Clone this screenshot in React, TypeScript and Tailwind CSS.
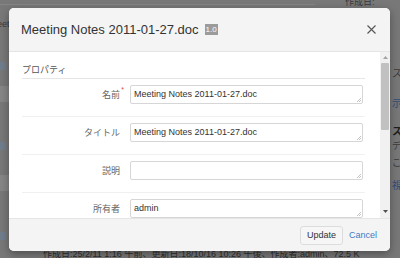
import React from "react";

function Field({ value }: { value: string }) {
  return (
    <div className="relative ml-[10px] mr-[2px] flex h-[19px] min-w-0 flex-1 items-center rounded-[2px] border border-[#d6d6d6] bg-white px-[3px] text-[9px] leading-[11px] text-[#333]">
      {value}
      <svg className="absolute bottom-[1px] right-[1px]" width="5" height="5" viewBox="0 0 5 5">
        <path d="M1 5 L5 1 M3 5 L5 3" stroke="#b5b5b5" strokeWidth="0.8" fill="none" />
      </svg>
    </div>
  );
}

function Row({ label, value, required }: { label: string; value: string; required?: boolean }) {
  return (
    <div className="flex items-center border-b border-[#f0f0f0] pb-[12px] pt-[6px]">
      <div className="relative w-[98px] shrink-0 text-right text-[9px] leading-[12px] text-[#666]">
        {label}
        {required && (
          <span className="absolute right-[-4px] top-[-3px] text-[7px] leading-none text-[#e23c3c]">*</span>
        )}
      </div>
      <Field value={value} />
    </div>
  );
}

export default function App() {
  return (
    <div className="relative h-[258px] w-[400px] overflow-hidden bg-[#787878] font-['Liberation_Sans','Noto_Sans_CJK_JP',sans-serif]">
      {/* background page, dimmed */}
      <div className="flex h-full flex-col">
        <div className="flex h-[8px] shrink-0 items-start">
          <div className="mt-[4px] h-px w-[315px] bg-[#858585]" />
          <div className="ml-[30px] mt-[-4px] text-[9px] leading-[12px] text-[#3a3a3a]">作成日:</div>
        </div>
        <div className="flex min-h-0 flex-1">
          <div className="flex w-[9px] shrink-0 flex-col overflow-hidden">
            <div className="ml-[-3px] mt-[11px] text-[9px] leading-[10px] text-[#3a3a3a]">eet</div>
            <div className="mt-[33px] h-[8px] w-[6px] rounded-[1px] bg-[#6f7d8c]" />
            <div className="mt-[16px] h-[16px] w-[9px] bg-[#858585]" />
            <div className="mt-[40px] h-[8px] w-[6px] rounded-[1px] bg-[#6f7d8c]" />
            <div className="mt-[25px] h-[16px] w-[9px] bg-[#858585]" />
            <div className="mt-[41px] h-[8px] w-[6px] rounded-[1px] bg-[#6f7d8c]" />
          </div>
          <div className="flex-1" />
          <div className="flex w-[9px] shrink-0 flex-col overflow-hidden whitespace-nowrap pl-[1px]">
            <div className="mt-[60px] text-[10px] leading-[12px] text-[#3a3a3a]">ス</div>
            <div className="mt-[18px] text-[10px] leading-[12px] text-[#2e4c78]">示</div>
            <div className="mt-[16px] text-[10px] font-bold leading-[12px] text-[#1e1e1e]">スス</div>
            <div className="mt-[3px] text-[9px] leading-[11px] text-[#3a3a3a]">デ</div>
            <div className="mt-[6px] text-[9px] leading-[11px] text-[#3a3a3a]">こ</div>
            <div className="mt-[11px] text-[10px] leading-[12px] text-[#2e4c78]">視</div>
          </div>
        </div>
        <div className="h-[9px] shrink-0 whitespace-nowrap pl-[43px] text-[9px] leading-[11px] text-[#2e2e2e]">
          作成日:25/2/11 1:16 午前、更新日:18/10/16 10:26 午後、作成者:admin、72.5 K
        </div>
      </div>

      {/* modal */}
      <div className="absolute left-[9px] top-[8px] flex h-[243px] w-[381px] flex-col overflow-hidden rounded-[5px] bg-white shadow-[0_3px_9px_rgba(0,0,0,0.35)]">
        <div className="flex h-[44px] shrink-0 items-center border-b border-[#e5e5e5] bg-[#f4f4f4] pl-[12px] pr-[14px]">
          <span className="text-[13px] leading-none text-[#333]">Meeting Notes 2011-01-27.doc</span>
          <span className="ml-[6px] h-[11px] bg-[#9b9b9b] px-[1px] text-[8px] leading-[11px] text-white">1.0</span>
          <svg className="ml-auto" width="9" height="9" viewBox="0 0 9 9">
            <path d="M0.5 0.5 L8.5 8.5 M8.5 0.5 L0.5 8.5" stroke="#555" strokeWidth="1.1" fill="none" />
          </svg>
        </div>

        <div className="flex h-[166px] shrink-0">
          <div className="min-w-0 flex-1 overflow-hidden pl-[13px] pr-[15px]">
            <div className="mt-[10px] h-[17px] border-b border-[#e6e6e6] text-[9px] leading-[16px] text-[#555]">
              プロパティ
            </div>
            <Row label="名前" value="Meeting Notes 2011-01-27.doc" required />
            <Row label="タイトル" value="Meeting Notes 2011-01-27.doc" />
            <Row label="説明" value="" />
            <Row label="所有者" value="admin" />
          </div>
          <div className="flex w-[10px] shrink-0 flex-col items-center bg-[#f1f1f1]">
            <svg className="mt-[4px]" width="5" height="3" viewBox="0 0 5 3">
              <path d="M0 3 L2.5 0 L5 3 Z" fill="#a3a3a3" />
            </svg>
            <div className="mt-[4px] h-[67px] w-[8px] rounded-[1px] bg-[#c1c1c1]" />
            <div className="flex-1" />
            <svg className="mb-[5px]" width="5" height="3" viewBox="0 0 5 3">
              <path d="M0 0 L5 0 L2.5 3 Z" fill="#505050" />
            </svg>
          </div>
        </div>

        <div className="flex h-[33px] shrink-0 items-center justify-end border-t border-[#e5e5e5] bg-[#f4f4f4] pr-[13px]">
          <button className="h-[19px] w-[43px] rounded-[3px] border border-[#dcdcdc] bg-[#f6f6f6] text-[9px] leading-none text-[#333]">
            Update
          </button>
          <span className="ml-[6px] text-[9px] leading-none text-[#3f7bc4]">Cancel</span>
        </div>
      </div>
    </div>
  );
}
